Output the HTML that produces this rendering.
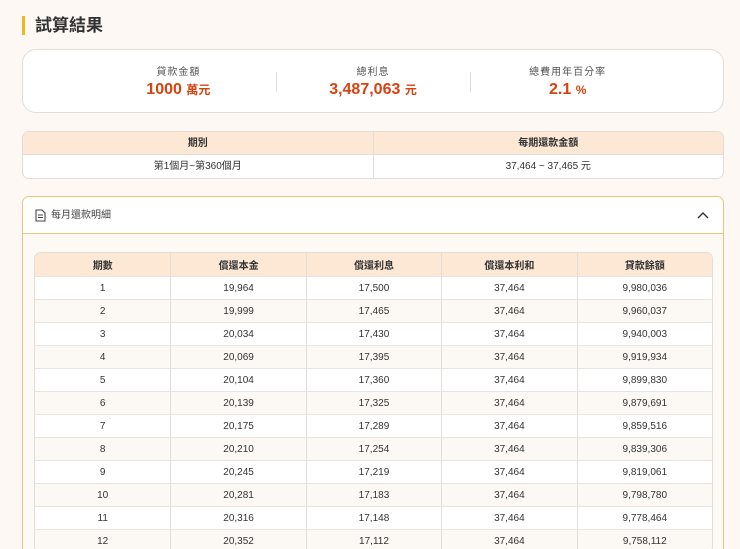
<!DOCTYPE html>
<html><head><meta charset="utf-8"><style>
*{box-sizing:border-box;margin:0;padding:0}
html,body{width:740px;height:549px;overflow:hidden}
body{background:#fdf8f3;font-family:"Liberation Sans","Noto Sans CJK TC",sans-serif;color:#333;position:relative}
.title{position:absolute;left:22px;top:16px;height:19px;border-left:3px solid #f3b61f;padding-left:10px;font-size:17px;font-weight:bold;line-height:19px;color:#333}
.sum{position:absolute;left:22px;top:49px;width:702px;height:64px;background:#fff;border:1px solid #e2ddd8;border-radius:14px;display:flex;padding:0 58px}
.sum>.c{flex:1;text-align:center;position:relative}
.sum>.c+.c:before{content:"";position:absolute;left:0;top:22px;height:20px;border-left:1px solid #ddd}
.sum .l{font-size:10px;color:#555;margin-top:13px;letter-spacing:1px}
.sum .v{font-size:16px;font-weight:bold;color:#d9420f;margin-top:3px}
.sum .v small{font-size:12px}
.per{position:absolute;left:22px;top:131px;width:702px;border:1px solid #e2ddd8;border-radius:7px;overflow:hidden;background:#fff;font-size:10px}
.per .r{display:flex;height:23px;line-height:23px;text-align:center}
.per .r div{flex:1}
.per .r div+div{border-left:1px solid #e2ddd8}
.per .h{background:#fde8d6;font-weight:bold;border-bottom:1px solid #e2ddd8}
.acc{position:absolute;left:22px;top:196px;width:702px;height:353px;border:1px solid #f0c27a;border-bottom:none;border-radius:7px 7px 0 0;background:#fdf9f5;overflow:hidden}
.acc .hd{height:37px;background:#fff;border-bottom:1px solid #f0c27a;font-size:10px;line-height:37px;padding-left:28px;position:relative;color:#444}
.acc .hd svg{position:absolute}
table{position:absolute;left:11px;top:55px;width:679px;border-collapse:separate;border-spacing:0;font-size:10px;text-align:center;border:1px solid #e2ddd8;border-radius:7px;overflow:hidden}
td,th{height:23px;border-left:1px solid #e2ddd8;border-top:1px solid #e8e4e0;font-weight:normal;width:20%}
th{background:#fde8d6;font-weight:bold;border-top:none}
tr td:first-child,tr th:first-child{border-left:none}
tr:nth-child(even) td{background:#fff}
tr:nth-child(odd) td{background:#fcf8f4}
</style></head><body>
<div class="title">試算結果</div>
<div class="sum">
<div class="c"><div class="l">貸款金額</div><div class="v">1000 <small>萬元</small></div></div>
<div class="c"><div class="l">總利息</div><div class="v">3,487,063 <small>元</small></div></div>
<div class="c"><div class="l">總費用年百分率</div><div class="v">2.1 <small>%</small></div></div>
</div>
<div class="per">
<div class="r h"><div>期別</div><div>每期還款金額</div></div>
<div class="r"><div>第1個月~第360個月</div><div>37,464 ~ 37,465 元</div></div>
</div>
<div class="acc">
<div class="hd"><svg style="left:12px;top:12px" width="11" height="13" viewBox="0 0 11 13"><path d="M1 1h6l3 3v8H1z M3 6h5 M3 8.5h5" fill="none" stroke="#444" stroke-width="1.1"/></svg>每月還款明細<svg style="right:14px;top:14px" width="12" height="8" viewBox="0 0 12 8"><path d="M1 7l5-5 5 5" fill="none" stroke="#333" stroke-width="1.4"/></svg></div>
<table>
<tr><th>期數</th><th>償還本金</th><th>償還利息</th><th>償還本利和</th><th>貸款餘額</th></tr>
<tr><td>1</td><td>19,964</td><td>17,500</td><td>37,464</td><td>9,980,036</td></tr>
<tr><td>2</td><td>19,999</td><td>17,465</td><td>37,464</td><td>9,960,037</td></tr>
<tr><td>3</td><td>20,034</td><td>17,430</td><td>37,464</td><td>9,940,003</td></tr>
<tr><td>4</td><td>20,069</td><td>17,395</td><td>37,464</td><td>9,919,934</td></tr>
<tr><td>5</td><td>20,104</td><td>17,360</td><td>37,464</td><td>9,899,830</td></tr>
<tr><td>6</td><td>20,139</td><td>17,325</td><td>37,464</td><td>9,879,691</td></tr>
<tr><td>7</td><td>20,175</td><td>17,289</td><td>37,464</td><td>9,859,516</td></tr>
<tr><td>8</td><td>20,210</td><td>17,254</td><td>37,464</td><td>9,839,306</td></tr>
<tr><td>9</td><td>20,245</td><td>17,219</td><td>37,464</td><td>9,819,061</td></tr>
<tr><td>10</td><td>20,281</td><td>17,183</td><td>37,464</td><td>9,798,780</td></tr>
<tr><td>11</td><td>20,316</td><td>17,148</td><td>37,464</td><td>9,778,464</td></tr>
<tr><td>12</td><td>20,352</td><td>17,112</td><td>37,464</td><td>9,758,112</td></tr>
</table>
</div>
</body></html>
